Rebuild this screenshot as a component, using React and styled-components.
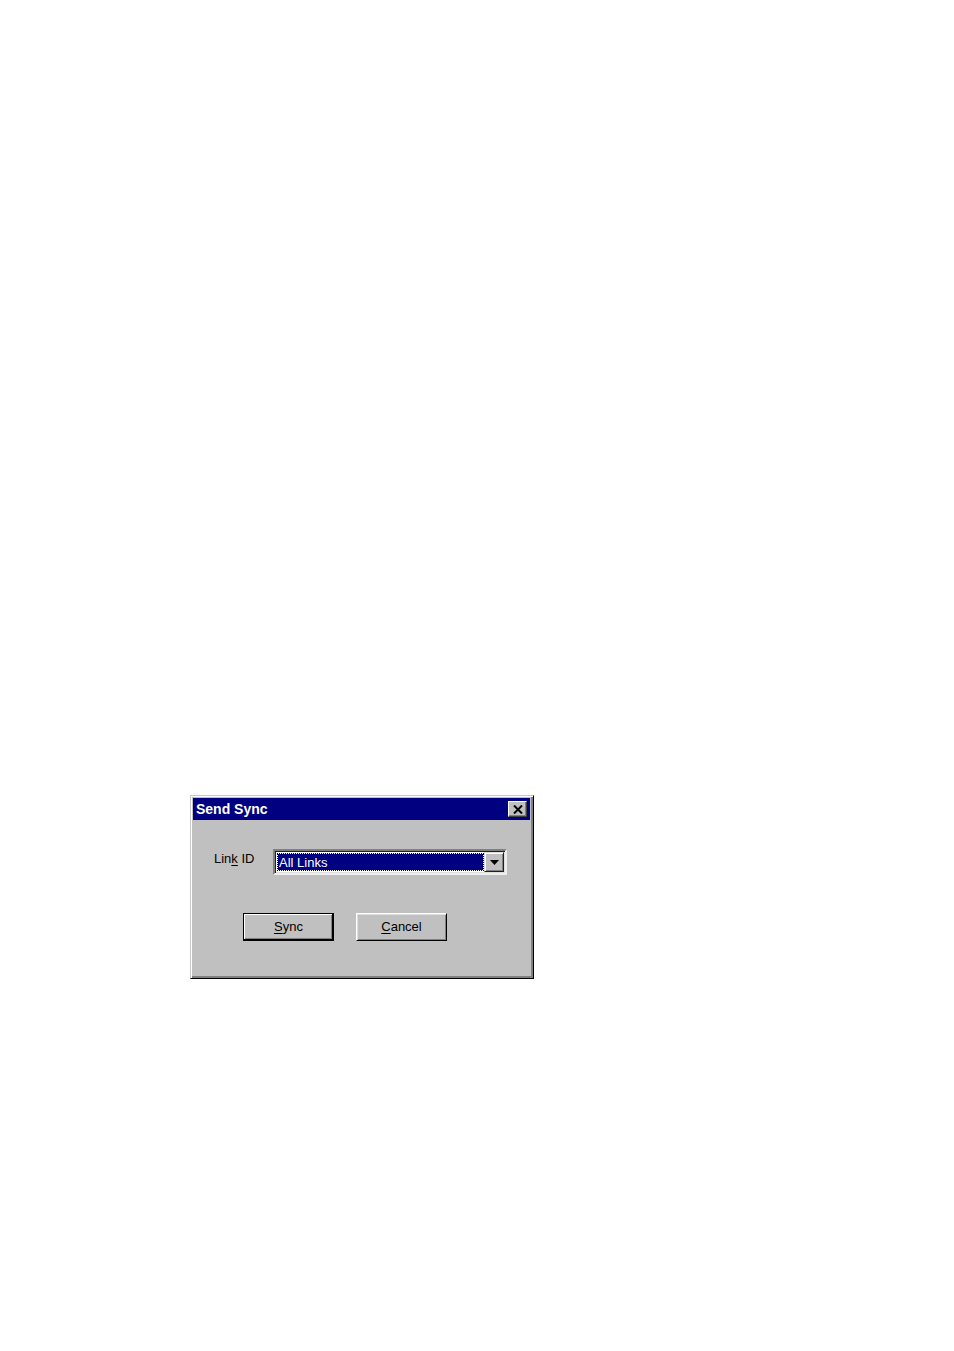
import React from 'react'
import styled, { createGlobalStyle } from 'styled-components'

const GlobalStyle = createGlobalStyle`
  *{
    box-sizing: border-box;
  }
  body{
    margin: 0;
    background: #fff;
  }
  button, select{
    font: inherit;
    color: inherit;
  }
`

const Page = styled.main`
  padding: 795px 20px 40px 190px;
  font-family: "Liberation Sans", Arial, sans-serif;
  font-size: 13px;
  line-height: 16px;
  color: #000;
`

const Dialog = styled.section`
  max-width: 344px;
  padding: 1px;
  background: #c0c0c0;
  border: 1px solid;
  border-color: #c8c8c8 #000 #000 #c8c8c8;
  box-shadow: inset 1px 1px #fff, inset -2px -2px #808080;
`

const TitleBar = styled.header`
  display: flex;
  align-items: center;
  justify-content: space-between;
  height: 22px;
  margin: 1px 2px 0 1px;
  padding: 0 3px;
  background: #000080;
  color: #fff;
`

const Title = styled.h1`
  margin: 0;
  font-size: 14px;
  line-height: 16px;
  font-weight: bold;
`

const CloseButton = styled.button`
  display: flex;
  align-items: center;
  justify-content: center;
  width: 19px;
  height: 16px;
  padding: 0;
  background: #c0c0c0;
  border: 1px solid;
  border-color: #fff #404040 #404040 #fff;
  box-shadow: inset -1px -1px #808080;
  color: #000;
`

const Form = styled.form`
  padding: 29px 25px 36px 22px;
`

const Field = styled.div`
  display: flex;
  align-items: flex-start;
  label{
    flex: 0 0 59px;
    padding-top: 2px;
  }
`

const Combo = styled.div`
  display: flex;
  flex: 1;
  height: 26px;
  padding: 1px;
  background: #fff;
  border: 2px solid;
  border-color: #808080 #eee #eee #808080;
  box-shadow: inset 1px 1px #202020, inset -1px -1px #dfdfdf;
`

const ComboSelect = styled.select`
  appearance: none;
  flex: 1;
  min-width: 0;
  margin: 1px 0 1px 1px;
  padding: 1px 1px 0;
  border: 1px dotted #000;
  border-radius: 0;
  outline: none;
  background: #000080;
  background-clip: padding-box;
  color: #fff;
`

const ComboArrow = styled.span`
  display: flex;
  align-items: center;
  justify-content: center;
  width: 20px;
  background: #c0c0c0;
  border: 1px solid;
  border-color: #dfdfdf #202020 #202020 #dfdfdf;
  box-shadow: inset 1px 1px #fff, inset -1px -1px #808080;
  pointer-events: none;
`

const Buttons = styled.div`
  display: flex;
  gap: 22px;
  margin-top: 38px;
  padding-left: 29px;
`

const Button = styled.button`
  width: 91px;
  height: 28px;
  padding: 0 0 1px;
  background: #c0c0c0;
  border: 1px solid;
  border-color: ${({ $primary }) => $primary ? '#000' : '#fff #000 #000 #fff'};
  box-shadow: ${({ $primary }) => $primary
    ? 'inset -1px -1px #000, inset 1px 1px #fff, inset -2px -2px #808080'
    : 'inset 1px 1px #dfdfdf, inset -1px -1px #808080'};
`

const Key = styled.span`
  text-decoration: underline;
  text-underline-offset: 2px;
  text-decoration-skip-ink: none;
`

const CloseIcon = () => (
  <svg width="10" height="9" viewBox="0 0 10 9" aria-hidden="true">
    <path d="M1 .5 9 8.5M9 .5 1 8.5" stroke="currentColor" strokeWidth="2" />
  </svg>
)

const ArrowIcon = () => (
  <svg width="9" height="5" viewBox="0 0 9 5" aria-hidden="true">
    <path d="M0 0h9L4.5 5z" fill="#000" />
  </svg>
)

const App = () => {
  return (
    <Page>
      <GlobalStyle />
      <Dialog role="dialog" aria-labelledby="dialog-title">
        <TitleBar>
          <Title id="dialog-title">Send Sync</Title>
          <CloseButton type="button" aria-label="Close">
            <CloseIcon />
          </CloseButton>
        </TitleBar>
        <Form onSubmit={(e) => e.preventDefault()}>
          <Field>
            <label htmlFor="link-id">Lin<Key>k</Key> ID</label>
            <Combo>
              <ComboSelect id="link-id" defaultValue="all">
                <option value="all">All Links</option>
              </ComboSelect>
              <ComboArrow>
                <ArrowIcon />
              </ComboArrow>
            </Combo>
          </Field>
          <Buttons>
            <Button type="submit" $primary><Key>S</Key>ync</Button>
            <Button type="button"><Key>C</Key>ancel</Button>
          </Buttons>
        </Form>
      </Dialog>
    </Page>
  )
}

export default App
